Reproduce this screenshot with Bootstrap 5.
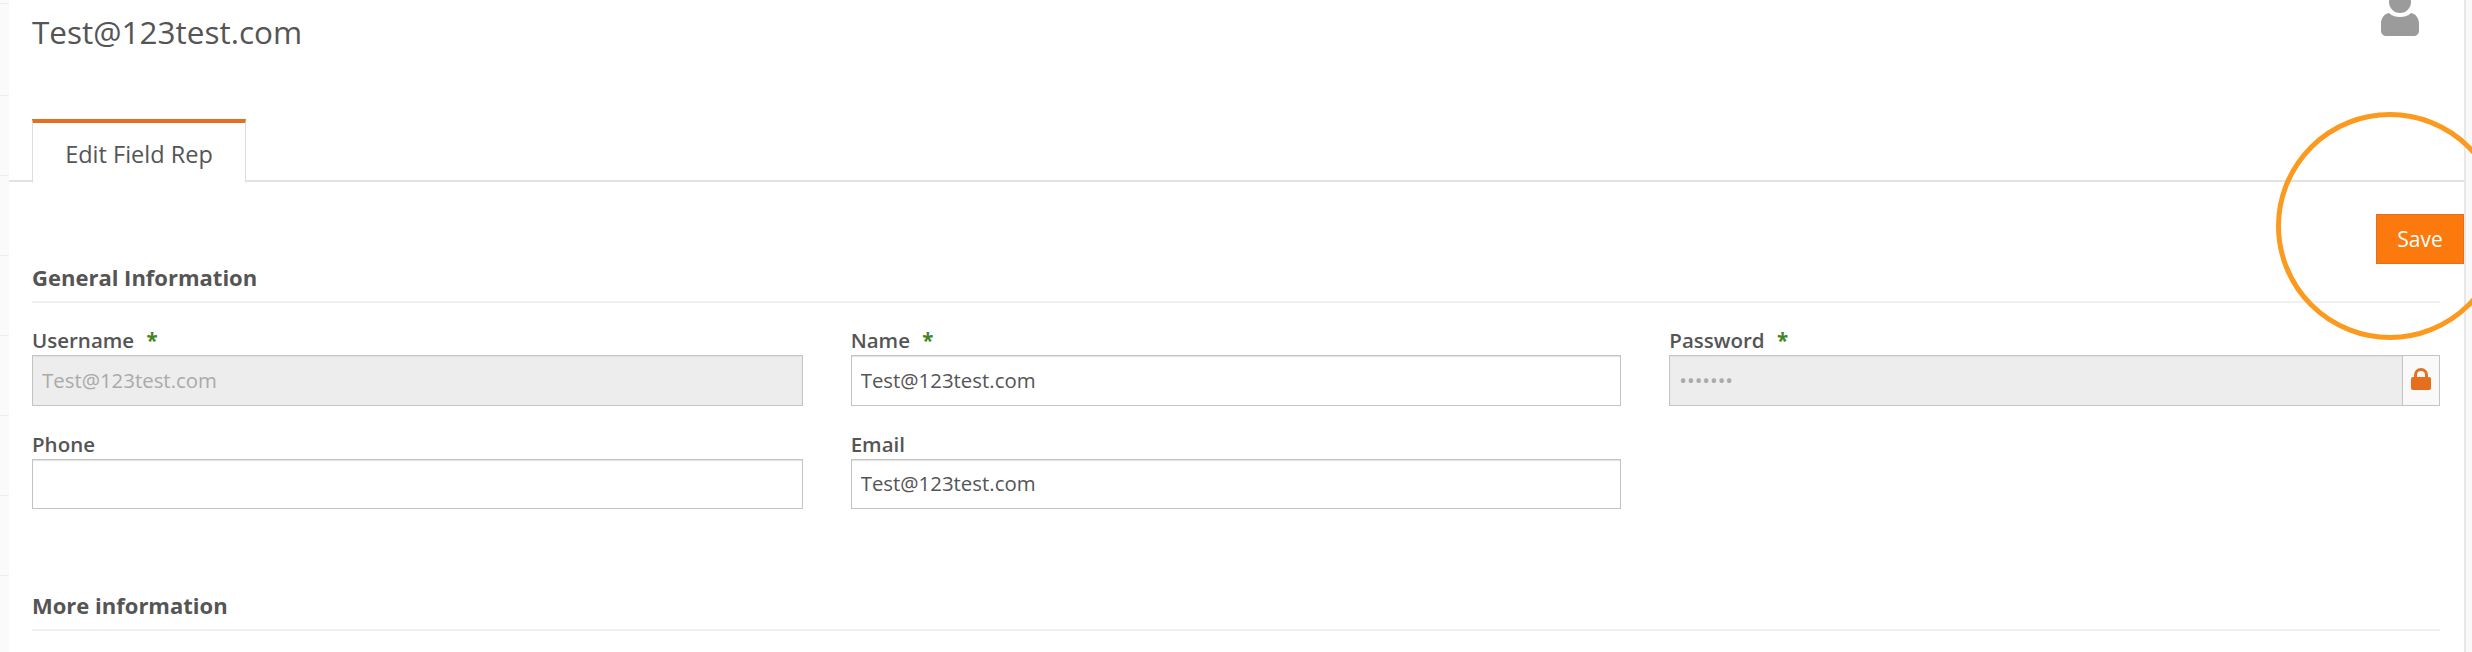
<!DOCTYPE html>
<html>

<head>
    <title>Edit Field Rep</title>
    <link href="https://cdn.jsdelivr.net/npm/bootstrap@5.3.0/dist/css/bootstrap.min.css" rel="stylesheet">
    <style>
        html, body {
            height: 652px;
            overflow: hidden;
        }

        body {
            font-family: "Open Sans", "Noto Sans", sans-serif;
            color: #555;
            background-color: #fff;
            position: relative;
        }

        .side-rows {
            width: 9px;
            flex: none;
            background-color: #fafafa;
            background-image: repeating-linear-gradient(to bottom, transparent 0, transparent 79px, #eee 79px, #eee 80px);
            background-position: 0 16px;
        }

        .side-bar {
            width: 8px;
            flex: none;
            background-color: #f9f9f9;
            border-left: 2px solid #e8e8e8;
        }

        .main-panel {
            min-width: 0;
            height: 652px;
        }

        .top-head {
            height: 119px;
            padding: 12px 24px 0 23px;
        }

        .page-title {
            font-size: 31.5px;
            line-height: 40px;
            font-weight: 400;
            margin: 0;
            color: #555;
        }

        .user-pic {
            display: block;
            width: 40px;
            height: 36px;
            margin-top: -12px;
            margin-right: 20px;
        }

        .edit-tabs {
            height: 63px;
            padding-left: 23px;
            border-bottom: 2px solid #e2e2e2;
        }

        .edit-tabs .nav-link {
            width: 214px;
            height: 64px;
            padding: 15px 0 0;
            text-align: center;
            font-size: 23.5px;
            line-height: 32px;
            color: #555;
            background-color: #fff;
            border: 1px solid #ddd;
            border-top: 4px solid #e56e1f;
            border-bottom-color: #fff;
            border-radius: 0;
        }

        .save-row {
            height: 50px;
            margin-top: 32px;
        }

        .save-btn {
            width: 88px;
            height: 50px;
            padding: 2px 0 0;
            font-size: 21px;
            font-weight: 500;
            color: #fff;
            background-color: #fb790d;
            border: 1px solid #e56e1f;
            border-radius: 0;
        }

        .form-area {
            padding: 0 24px 0 23px;
        }

        .group-title {
            font-size: 22px;
            line-height: 28px;
            font-weight: 700;
            color: #555;
            padding-bottom: 10px;
            border-bottom: 2px solid #f0f0f0;
            margin: -1px 0 0;
        }

        .fields-row {
            --bs-gutter-x: 48px;
            --bs-gutter-y: 0;
        }

        .field-label {
            display: block;
            font-size: 20.5px;
            line-height: 24px;
            font-weight: 600;
            color: #555;
            margin: -1px 0 3px;
        }

        .req-star {
            color: #3f8524;
            font-weight: 700;
            margin-left: 7px;
        }

        .field-box {
            height: 51px;
            font-family: inherit;
            font-size: 20.4px;
            color: #555;
            padding: 0 9px 2px;
            border: 1px solid #c4c4c4;
            border-radius: 0;
            box-shadow: inset 0 1px 1px #e2e2e2;
        }

        .field-box:disabled {
            background-color: #ededed;
            color: #aaa;
            opacity: 1;
            -webkit-text-fill-color: #aaa;
        }

        .lock-cell {
            width: 38px;
            justify-content: center;
            padding: 0 0 2px 1px;
            background-color: #f9f9f9;
            border: 1px solid #c4c4c4;
            border-left-color: #d8d8d8;
            border-radius: 0;
        }

        .ring-mark {
            position: absolute;
            left: 2276px;
            top: 112px;
            width: 228px;
            height: 228px;
            border: 5px solid #fb9a1f;
            border-radius: 50%;
            pointer-events: none;
        }

        .first-fields { margin-top: 26px; }
        .second-fields { margin-top: 27px; }
        .second-fields .field-box { height: 50px; }
        .more-title { margin-top: 82px; }
    </style>
</head>

<body>
    <div class="d-flex">
        <div class="side-rows"></div>

        <div class="main-panel flex-grow-1">
            <div class="top-head d-flex justify-content-between align-items-start">
                <h1 class="page-title">Test@123test.com</h1>
                <svg class="user-pic" viewBox="0 0 40 36" fill="#9b9b9b">
                    <circle cx="20" cy="2" r="11"/>
                    <path d="M9 13c3 3 7 4 11 4s8-1 11-4c5 1 8 5 8 11v6c0 4-2 6-6 6H7c-4 0-6-2-6-6v-6c0-6 3-10 8-11z"/>
                </svg>
            </div>

            <ul class="nav edit-tabs">
                <li class="nav-item">
                    <a class="nav-link active" href="#">Edit Field Rep</a>
                </li>
            </ul>

            <div class="save-row d-flex justify-content-end">
                <button class="btn save-btn" type="button">Save</button>
            </div>

            <div class="form-area">
                <h5 class="group-title">General Information</h5>

                <div class="row fields-row first-fields">
                    <div class="col-4">
                        <label class="field-label">Username <span class="req-star">*</span></label>
                        <input class="form-control field-box" type="text" value="Test@123test.com" disabled>
                    </div>
                    <div class="col-4">
                        <label class="field-label">Name <span class="req-star">*</span></label>
                        <input class="form-control field-box" type="text" value="Test@123test.com">
                    </div>
                    <div class="col-4">
                        <label class="field-label">Password <span class="req-star">*</span></label>
                        <div class="input-group">
                            <input class="form-control field-box" type="password" value="1234567" disabled>
                            <span class="input-group-text lock-cell">
                                <svg width="20" height="23" viewBox="0 0 20 23" fill="#e56e1f">
                                    <path d="M3 9V7a7 7 0 0 1 14 0v2h1a2 2 0 0 1 2 2v9a2 2 0 0 1-2 2H2a2 2 0 0 1-2-2v-9a2 2 0 0 1 2-2zm3 0h8V7a4 4 0 0 0-8 0z"/>
                                </svg>
                            </span>
                        </div>
                    </div>
                </div>

                <div class="row fields-row second-fields">
                    <div class="col-4">
                        <label class="field-label">Phone</label>
                        <input class="form-control field-box" type="text">
                    </div>
                    <div class="col-4">
                        <label class="field-label">Email</label>
                        <input class="form-control field-box" type="text" value="Test@123test.com">
                    </div>
                </div>

                <h5 class="group-title more-title">More information</h5>
            </div>
        </div>

        <div class="side-bar"></div>
    </div>

    <div class="ring-mark"></div>
</body>

</html>
